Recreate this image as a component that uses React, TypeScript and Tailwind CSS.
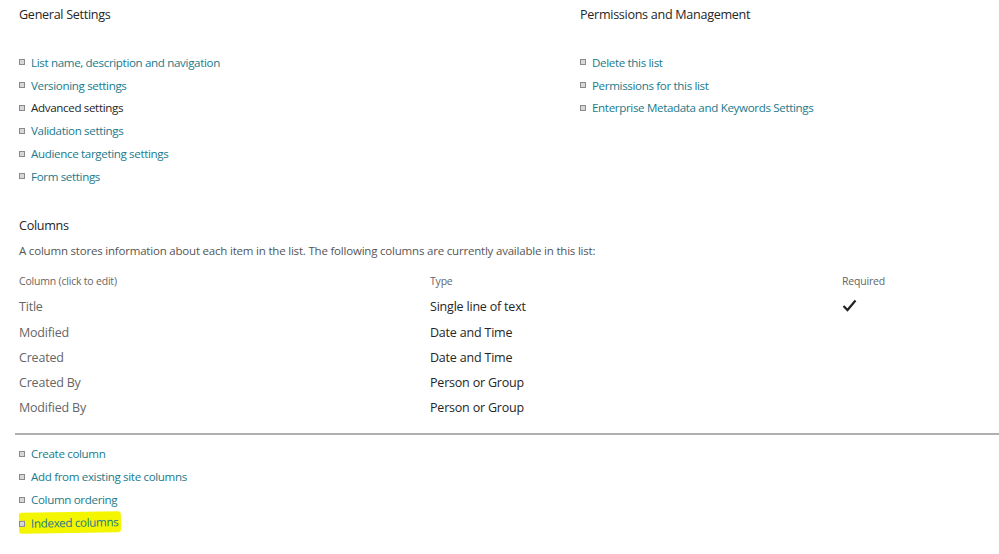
import React from "react";

const font = { fontFamily: '"Open Sans", "Noto Sans", sans-serif' };

function Bullet() {
  return <span className="inline-block w-[6px] h-[6px] border border-[#8a8a8a] bg-[#d8d8d8] mr-[6px] shrink-0" />;
}

function LinkItem({ text, dark }: { text: string; dark?: boolean }) {
  return (
    <div className="flex items-center h-[22.8px]">
      <Bullet />
      <span className={dark ? "text-[#262626]" : "text-[#1a7a8c]"}>{text}</span>
    </div>
  );
}

export default function App() {
  const rows: [string, string, boolean, string][] = [
    ["Title", "Single line of text", true, "h-[27px]"],
    ["Modified", "Date and Time", false, "h-[25px]"],
    ["Created", "Date and Time", false, "h-[25px]"],
    ["Created By", "Person or Group", false, "h-[25px]"],
    ["Modified By", "Person or Group", false, "h-[25px]"],
  ];
  return (
    <div className="w-[999px] h-[554px] bg-white overflow-hidden text-[11.6px] tracking-[-0.35px]" style={font}>
      <div className="flex pl-[19px] pt-[5px]">
        <div className="w-[561px]">
          <div className="text-[12.6px] tracking-[-0.3px] text-[#262626] h-[20px] leading-[20px]">General Settings</div>
          <div className="mt-[26px]">
            <LinkItem text="List name, description and navigation" />
            <LinkItem text="Versioning settings" />
            <LinkItem text="Advanced settings" dark />
            <LinkItem text="Validation settings" />
            <LinkItem text="Audience targeting settings" />
            <LinkItem text="Form settings" />
          </div>
        </div>
        <div>
          <div className="text-[12.6px] tracking-[-0.3px] text-[#262626] h-[20px] leading-[20px]">Permissions and Management</div>
          <div className="mt-[26px]">
            <LinkItem text="Delete this list" />
            <LinkItem text="Permissions for this list" />
            <LinkItem text="Enterprise Metadata and Keywords Settings" />
          </div>
        </div>
      </div>

      <div className="pl-[19px] mt-[28px]">
        <div className="text-[12.6px] tracking-[-0.3px] text-[#262626] h-[20px] leading-[20px]">Columns</div>
        <div className="text-[11.5px] tracking-[-0.2px] text-[#555] mt-[5px] h-[20px] leading-[20px]">
          A column stores information about each item in the list. The following columns are currently available in this list:
        </div>
        <div className="grid grid-cols-[411px_412px_1fr] text-[10.5px] tracking-[-0.2px] text-[#666] mt-[11px] h-[21px] items-center">
          <span>Column (click to edit)</span>
          <span>Type</span>
          <span>Required</span>
        </div>
        {rows.map(([name, type, req, h], i) => (
          <div key={name} className={`grid grid-cols-[411px_412px_1fr] items-center text-[12.5px] tracking-[-0.2px] ${h} ${i === 0 ? "mt-[1px]" : ""}`}>
            <span className="text-[#666]">{name}</span>
            <span className="text-[#262626]">{type}</span>
            <span>
              {req && (
                <svg width="15" height="13" viewBox="0 0 15 13" className="-mt-[4px]">
                  <path d="M1.5 7 L5.5 11 L13.5 1.5" fill="none" stroke="#222" strokeWidth="2.2" />
                </svg>
              )}
            </span>
          </div>
        ))}
      </div>

      <div className="ml-[15px] mt-[12px] border-t-2 border-[#b0b0b0] h-0" />

      <div className="pl-[19px] mt-[8px]">
        <LinkItem text="Create column" />
        <LinkItem text="Add from existing site columns" />
        <LinkItem text="Column ordering" />
        <div className="flex items-center h-[22.8px]">
          <div className="flex items-center bg-[#f4f500] pr-[3px] py-[2px] -rotate-[1deg] rounded-[3px]">
            <Bullet />
            <span className="text-[#1a7a8c]">Indexed columns</span>
          </div>
        </div>
      </div>
    </div>
  );
}
